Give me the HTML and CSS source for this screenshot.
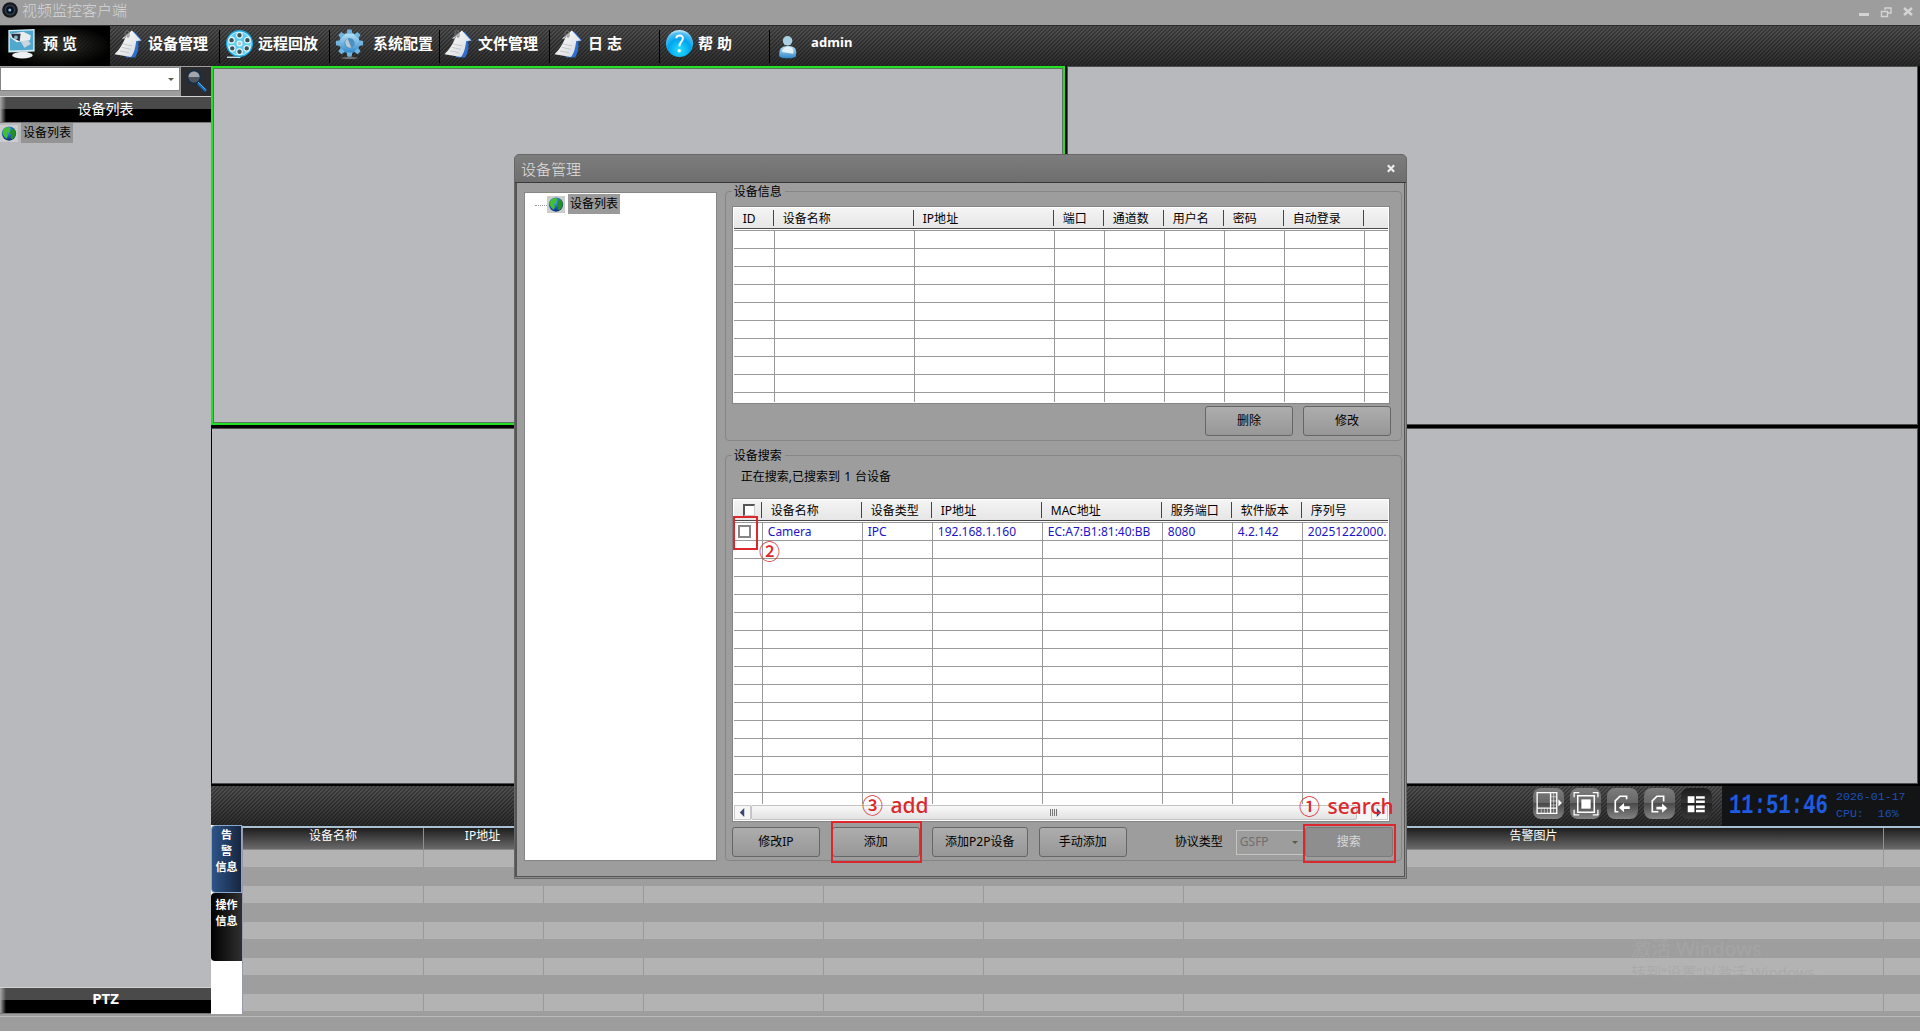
FILE: index.html
```html
<!DOCTYPE html>
<html lang="zh-CN">
<head>
  <meta charset="UTF-8" />
  <title>视频监控客户端</title>
  <link rel="stylesheet" href="styles.css">
</head>
<body>
  <!-- Shared icon shapes -->
  <svg class="defs" width="0" height="0">
    <defs>
      <linearGradient id="g-blue" x1="0" y1="0" x2="0" y2="1">
        <stop offset="0" stop-color="#b9e4fb"/><stop offset="1" stop-color="#2f86c8"/>
      </linearGradient>
      <linearGradient id="g-paper" x1="0" y1="0" x2="1" y2="1">
        <stop offset="0" stop-color="#ffffff"/><stop offset="1" stop-color="#d4d8dc"/>
      </linearGradient>
      <radialGradient id="g-help" cx=".5" cy=".75" r=".75">
        <stop offset="0" stop-color="#25e0ff"/><stop offset=".55" stop-color="#00a4ee"/><stop offset=".85" stop-color="#52bff2"/><stop offset="1" stop-color="#d8f4ff"/>
      </radialGradient>
      <radialGradient id="g-globe" cx=".4" cy=".3" r=".8">
        <stop offset="0" stop-color="#5cb4ff"/><stop offset=".6" stop-color="#1450b4"/><stop offset="1" stop-color="#061c50"/>
      </radialGradient>
      <symbol id="i-globe" viewBox="0 0 16 16">
        <circle cx="8" cy="8" r="7.600" fill="url(#g-globe)"/>
        <path d="M1.500 5C3 1.500 6 .8 8.500 1L9.500 3 7.500 4.500 8.200 6.500 5.500 7.500 7 10 5.500 13.500 3 11.500 1 8z" fill="#3fc22e"/>
        <path d="M10 4l3-1.500 2.300 4-.5 4-3 3.500-2.500-1 1-3-1.500-2.500z" fill="#258f25"/>
      </symbol>
      <symbol id="i-paper" viewBox="0 0 30 30">
        <path d="M16 4l5-2 8 9.500-4 1c1 6 0 11-3 16.500H12z" fill="#2d6fd0"/>
        <path d="M8 9.500L18.500 1 28 11.500l-5 .5c-1 7-2 12.500-5.500 16.500L.5 25.500C5 21 8.500 16.500 11.500 9z" fill="url(#g-paper)"/>
        <path d="M9.500 15l9.500 2M8 18.500l9.500 2M6 22l9.500 2" stroke="#b4babf" stroke-width=".7" fill="none"/>
        <path d="M11.500 9V3.500a2 2 0 0 1 4-.5V7a1 1 0 0 1-2 0V4" stroke="#777" stroke-width="1" fill="none"/>
      </symbol>
    </defs>
  </svg>

  <header class="titlebar">
    <svg class="app-icon" viewBox="0 0 16 16">
      <circle cx="8" cy="8" r="7.800" fill="#15181c"/><circle cx="8" cy="8" r="5.500" fill="#303b48"/>
      <circle cx="8" cy="8" r="3.800" fill="#07121f"/><circle cx="7.800" cy="8" r="1.500" fill="#8eb8de"/>
    </svg>
    <span class="app-title">视频监控客户端</span>
    <div class="win-buttons">
      <svg viewBox="0 0 12 12"><path d="M1 8.500h10" stroke-width="3"/></svg>
      <svg viewBox="0 0 12 12"><path d="M5 4V2h6v5H8M1.500 5.500h6v5h-6z" stroke-width="1.400"/></svg>
      <svg viewBox="0 0 12 12"><path d="M2 2l8 7M10 2L2 9" stroke-width="2.400"/></svg>
    </div>
  </header>

  <nav class="navbar hatch">
    <a class="nav-item active">
      <svg class="nav-icon" viewBox="0 0 30 32">
        <path d="M1 1l28-1v24L1 25z" fill="#d4eef7"/><path d="M2.500 2.500l25-1V22l-25 1z" fill="#4fa9ce"/>
        <path d="M3 5l14-2 8 4-1 5-14 2-7-5z" fill="#e8edf0"/><path d="M4 5l10 0-1 8-8-4z" fill="#26333d"/><circle cx="9" cy="9" r="2" fill="#8fb1c6"/>
        <path d="M14 13l8-1 3 4-7 4z" fill="#cbd6dc"/><path d="M13 23h8l1 4H12z" fill="#c9d2d7"/><ellipse cx="16" cy="28" rx="11" ry="3.500" fill="#eef1f3"/>
      </svg>
      <span>预 览</span>
    </a>
    <a class="nav-item file"><svg class="nav-icon"><use href="#i-paper"/></svg><span>设备管理</span></a>
    <a class="nav-item">
      <svg class="nav-icon" viewBox="0 0 30 30">
        <path d="M2 28h14v1.500H2z" fill="#c8dce6"/>
        <circle cx="15" cy="14.500" r="14" fill="#19a8e6"/><circle cx="15" cy="14.500" r="12.500" fill="#c9f0fc"/>
        <circle cx="15" cy="14.500" r="11.500" fill="#5ccff2"/>
        <g fill="#3d5059" stroke="#e4f9ff" stroke-width="1.200"><circle cx="15" cy="6" r="2.900"/><circle cx="15" cy="23" r="2.900"/><circle cx="6.800" cy="11" r="2.900"/><circle cx="23.200" cy="11" r="2.900"/><circle cx="7.500" cy="19.500" r="2.900"/><circle cx="22.500" cy="19.500" r="2.900"/><circle cx="15" cy="14.500" r="2.500" fill="#b8c6cc"/></g>
      </svg>
      <span>远程回放</span>
    </a>
    <a class="nav-item wide">
      <svg class="nav-icon" viewBox="0 0 30 32">
        <g fill="url(#g-blue)"><circle cx="15" cy="15" r="11"/>
          <path id="tooth" d="M12 5l.7-4.500h4.600L18 5z" fill="#6fb5e2"/>
          <use href="#tooth" transform="rotate(45 15 15)"/><use href="#tooth" transform="rotate(90 15 15)"/><use href="#tooth" transform="rotate(135 15 15)"/><use href="#tooth" transform="rotate(180 15 15)"/><use href="#tooth" transform="rotate(225 15 15)"/><use href="#tooth" transform="rotate(270 15 15)"/><use href="#tooth" transform="rotate(315 15 15)"/>
        </g>
        <circle cx="15" cy="15" r="5.500" fill="#4d90bf"/><path d="M13 10a5.500 5.500 0 0 0 4 10z" fill="#b8c9d3"/>
        <ellipse cx="15" cy="31" rx="9" ry=".8" fill="#888"/>
      </svg>
      <span>系统配置</span>
    </a>
    <a class="nav-item file"><svg class="nav-icon"><use href="#i-paper"/></svg><span>文件管理</span></a>
    <a class="nav-item file"><svg class="nav-icon"><use href="#i-paper"/></svg><span>日 志</span></a>
    <a class="nav-item">
      <svg class="nav-icon" viewBox="0 0 30 30">
        <circle cx="15" cy="14.500" r="14" fill="url(#g-help)"/>
        <path d="M11.500 9c1-4 7.500-3.500 7 .5-.4 3-3.500 3.500-3.700 8" stroke="#fff" stroke-width="2" fill="none"/><circle cx="14.700" cy="22" r="1.700" fill="#fff"/>
      </svg>
      <span>帮 助</span>
    </a>
    <a class="nav-item user">
      <svg class="nav-icon" viewBox="0 0 30 30">
        <path d="M5 27c-1-9 3-12 10-12s11 3 9 12c-3 3-16 3-19 0z" fill="url(#g-blue)"/>
        <path d="M8 22c1-5 4-6 8-6s6 4 5 8z" fill="#e3f1f7"/>
        <circle cx="14.500" cy="9" r="5.500" fill="#a9d0e2"/>
      </svg>
      <span>admin</span>
    </a>
  </nav>

  <div class="workspace">
    <aside class="sidebar">
      <div class="search-row">
        <div class="combo"><i class="caret"></i></div>
        <div class="search-btn">
          <svg viewBox="0 0 30 28"><circle cx="13" cy="10" r="6.500" fill="#4e565e" stroke="#102f4c" stroke-width="1.500"/><path d="M7.500 10a5.500 5.500 0 0 1 11 0z" fill="#a4a7aa"/><path d="M17 16l8 8" stroke="#1470ba" stroke-width="2.800"/><path d="M17 15l7.500 7.500" stroke="#6db9ee" stroke-width=".8"/></svg>
        </div>
      </div>
      <div class="panel-head">设备列表</div>
      <div class="tree">
        <svg class="globe"><use href="#i-globe"/></svg><span class="tree-label">设备列表</span>
      </div>
      <div class="panel-head ptz">PTZ</div>
    </aside>

    <main class="main">
      <div class="video-grid">
        <div class="video selected"></div><div class="video"></div>
        <div class="video"></div><div class="video"></div>
      </div>

      <div class="control-bar hatch">
        <div class="tool-btn"><svg viewBox="0 0 30 30"><path d="M4 4.500h19v20H4zM17 4.500v20M4 19.500h19" stroke-width="1.300"/><path d="M20 5v19M17 8.500h6M17 12.500h6M17 16.500h6M8 20v4M11 20v4M14 20v4" stroke-width=".5"/><path d="M24.500 11l3.500 3.500-3.500 3.500z" class="solid"/></svg></div>
        <div class="tool-btn"><svg viewBox="0 0 30 30"><path d="M7.500 7.500h16v16h-16z" stroke-width="1.500"/><path d="M11 11h9v9h-9z" class="solid"/><path d="M4 9V4.500h5M22 4.500h5V9M27 21v5h-5M9 26H4v-5" stroke-width="1.200"/></svg></div>
        <div class="tool-btn"><svg viewBox="0 0 30 30"><path d="M19 11V8h-6.500L8 12.500V23h3" stroke-width="1.600"/><path d="M11.500 19l5-4.500v3.200H22v2.600h-5.500v3.200z" class="solid"/></svg></div>
        <div class="tool-btn"><svg viewBox="0 0 30 30"><path d="M19 13V8h-6.500L8 12.500V23h6" stroke-width="1.600"/><path d="M22.500 19.500l-5-4.500v3.200h-5.500v2.600h5.500V24z" class="solid"/></svg></div>
        <div class="tool-btn pressed"><svg viewBox="0 0 30 30"><path d="M6.500 8h6.500v6.500H6.500zM6.500 17h6.500v6.500H6.500zM14.500 8H23v2.500h-8.500zM14.500 12H23v2.500h-8.500zM14.500 17H23v2.500h-8.500zM14.500 21H23v2.500h-8.500z" class="solid"/></svg></div>
        <div class="clock">
          <div class="clock-time">11:51:46</div>
          <div class="clock-info"><div>2026-01-17</div><div>CPU:&nbsp; 16%</div></div>
        </div>
      </div>

      <div class="alarm">
        <div class="tabs">
          <div class="tab active">告<br>警<br>信息</div>
          <div class="tab">操作<br>信息</div>
        </div>
        <div class="alarm-list">
          <div class="alarm-head"><span>设备名称</span><span>IP地址</span><span></span><span></span><span></span><span></span><span>告警图片</span><span></span></div>
          <div class="alarm-rows" id="alarm-rows"></div>
          <div class="watermark"><div>激活 Windows</div><p>转到“设置”以激活 Windows。</p></div>
        </div>
      </div>
    </main>
  </div>
  <footer class="statusbar"></footer>

  <!-- Device management dialog -->
  <section class="dialog">
    <div class="dialog-title"><span>设备管理</span>
      <svg viewBox="0 0 10 10"><path d="M1.500 1.500l7 7M8.500 1.500l-7 7"/></svg>
    </div>
    <div class="dialog-body">
      <div class="dialog-tree">
        <i class="dots"></i><svg class="globe"><use href="#i-globe"/></svg><span class="tree-label">设备列表</span>
      </div>
      <div class="dialog-right">
        <div class="group info">
          <div class="legend">设备信息</div>
          <div class="grid info-grid">
            <div class="grid-head"><span class="id-head">ID</span><span>设备名称</span><span>IP地址</span><span>端口</span><span>通道数</span><span>用户名</span><span>密码</span><span>自动登录</span><span></span></div>
            <div class="grid-body" id="info-body"></div>
          </div>
          <div class="btn-row right"><button>删除</button><button>修改</button></div>
        </div>

        <div class="group search">
          <div class="legend">设备搜索</div>
          <div class="search-status">正在搜索,已搜索到 1 台设备</div>
          <div class="grid search-grid">
            <div class="grid-head"><span class="check-head"><i></i></span><span>设备名称</span><span>设备类型</span><span>IP地址</span><span>MAC地址</span><span>服务端口</span><span>软件版本</span><span>序列号</span></div>
            <div class="grid-body" id="search-body">
              <div class="grid-row"><span><i class="check"></i></span><span>Camera</span><span>IPC</span><span>192.168.1.160</span><span>EC:A7:B1:81:40:BB</span><span>8080</span><span>4.2.142</span><span>20251222000.</span></div>
            </div>
            <div class="scrollbar">
              <div class="arrow"><svg viewBox="0 0 6 10"><path d="M5.500 0v10L.5 5z"/></svg></div>
              <div class="thumb"><i></i></div>
              <div class="arrow end"><svg viewBox="0 0 6 10"><path d="M.5 0v10l5-5z"/></svg></div>
            </div>
          </div>
          <div class="btn-row">
            <button>修改IP</button><button>添加</button><button class="p2p">添加P2P设备</button><button class="manual">手动添加</button>
            <label>协议类型</label>
            <div class="protocol">GSFP<i class="caret"></i></div>
            <button class="disabled">搜索</button>
          </div>
        </div>
      </div>
    </div>
  </section>

  <!-- Step marks -->
  <div class="mark box-check"></div>
  <div class="mark box-add"></div>
  <div class="mark box-search"></div>
  <div class="step step-check">②</div>
  <div class="step step-add">③ add</div>
  <div class="step step-search">① search</div>

  <script>
    // Fill a list with empty rows so the cell lines show
    function addRows(id, rowClass, count, cols) {
      const body = document.getElementById(id);
      for (let i = 0; i < count; i++) {
        const row = document.createElement('div');
        row.className = rowClass;
        row.innerHTML = '<span></span>'.repeat(cols);
        body.appendChild(row);
      }
    }
    addRows('info-body', 'grid-row', 10, 9);
    addRows('search-body', 'grid-row', 15, 8);
    addRows('alarm-rows', 'alarm-row', 5, 8);
  </script>
</body>
</html>
```
FILE: styles.css
```css
* {
  box-sizing: border-box;
}
body {
  margin: 0;
  width: 1920px;
  height: 1032px;
  overflow: hidden;
  position: relative;
  display: flex;
  flex-direction: column;
  background: #fff;
  color: #000;
  font-family: "Noto Sans", "Noto Sans CJK SC", sans-serif;
  font-size: 12px;
  line-height: 16px;
}
svg {
  display: block;
  flex: none;
}
.defs {
  position: absolute;
}
span {
  white-space: nowrap;
}

/* Title bar */
.titlebar {
  height: 25px;
  flex: none;
  display: flex;
  align-items: flex-start;
  padding: 2px 6px 0 2px;
  background: #9d9d9d;
}
.app-icon {
  width: 16px;
  height: 16px;
}
.app-title {
  margin-left: 4px;
  font-size: 15px;
  line-height: 16px;
  font-weight: 300;
  color: #d6d6d6;
}
.win-buttons {
  margin-left: auto;
  display: flex;
  gap: 10px;
  padding-top: 4px;
}
.win-buttons svg {
  width: 12px;
  height: 12px;
  fill: none;
  stroke: #d4d4d4;
}

/* Navigation */
.hatch {
  background:
    linear-gradient(135deg, rgba(0, 0, 0, .3) 25%, transparent 25%, transparent 50%, rgba(0, 0, 0, .3) 50%, rgba(0, 0, 0, .3) 75%, transparent 75%) 0 0 / 4px 4px,
    linear-gradient(#525252, #2c2c2c);
}
.navbar {
  height: 41px;
  flex: none;
  display: flex;
  border-top: 1px solid #2b2b2b;
}
.nav-item {
  width: 110px;
  height: 40px;
  display: flex;
  align-items: center;
  padding: 0 0 4px 5px;
  color: #fff;
  font-size: 15px;
  font-weight: 700;
  background: linear-gradient(#000, #000) right 4px / 1px 33px no-repeat;
}
.nav-item span {
  padding-bottom: 2px;
}
.nav-item.active {
  padding-left: 7px;
  background: radial-gradient(ellipse at center, rgba(40, 44, 20, .3), #000 75%);
}
.nav-item.user {
  background: none;
}
.nav-icon {
  width: 29px;
  height: 30px;
  margin-right: 4px;
}
.active .nav-icon {
  margin-right: 7px;
}
.wide .nav-icon {
  margin: 0 9px 0 0;
}
.file .nav-icon {
  margin: 0 5px 0 -1px;
}
.user .nav-icon {
  width: 28px;
  height: 26px;
  margin: 4px 9px 0 -1px;
}
.user span {
  font-size: 13px;
  letter-spacing: .1px;
  padding-bottom: 5px;
}

/* Sidebar */
.workspace {
  height: 948px;
  flex: none;
  display: flex;
}
.sidebar {
  width: 211px;
  display: flex;
  flex-direction: column;
  background: #b7b9bd;
}
.search-row {
  height: 30px;
  display: flex;
  align-items: flex-start;
  background: #9d9d9d;
  padding-top: 1px;
}
.combo {
  width: 180px;
  height: 24px;
  border: 1px solid #858585;
  background: #fff;
  display: flex;
  align-items: center;
  justify-content: flex-end;
  padding-right: 5px;
}
.caret {
  border: 3px solid transparent;
  border-top-color: #5b5a49;
  border-bottom: 0;
}
.search-btn {
  width: 30px;
  height: 29px;
  margin-left: 1px;
  background: #2c2c2e;
}
.panel-head {
  height: 27px;
  border-top: 1px solid #d2d2d2;
  border-bottom: 1px solid #777;
  background: linear-gradient(90deg, #a8a8a8, transparent 6px), linear-gradient(#4a4a4a 12px, #000 12px);
  color: #fff;
  font-size: 14px;
  line-height: 24px;
  text-align: center;
}
.tree {
  flex: 1;
  display: flex;
  align-items: flex-start;
}
.globe {
  width: 18px;
  height: 17px;
  margin-top: 2px;
  padding: 1px;
  background: #ccc;
}
.tree-label {
  margin-left: 3px;
  padding: 0 2px;
  height: 20px;
  line-height: 19px;
  background: #949494;
}
.ptz {
  font-size: 15px;
  font-weight: 700;
  line-height: 20px;
}

/* Video area */
.main {
  width: 1709px;
  display: flex;
  flex-direction: column;
}
.video-grid {
  height: 720px;
  display: grid;
  grid-template-columns: 854px 851px;
  grid-template-rows: 359px 356px;
  gap: 3px 2px;
  background: #000;
  padding: 0 2px 2px 0;
}
.video {
  background: #b7b9bd;
  border: 1px solid #4d4d4d;
}
.video:nth-child(n+3) {
  border-left: 1px solid #000;
}
.video.selected {
  border: 2px solid #22e022;
  box-shadow: inset 0 0 0 1px #5d755d;
}

/* Control bar */
.control-bar {
  height: 40px;
  display: flex;
  justify-content: flex-end;
}
.tool-btn {
  width: 31px;
  height: 31px;
  margin: 2px 6px 0 0;
  border-radius: 8px;
  background: linear-gradient(#7c7c7c 0, #666 48%, #4a4a4a 50%, #848484);
}
.tool-btn.pressed {
  margin-right: 10px;
  background: linear-gradient(#1c1c1c, #363636 50%, #222 50%, #383838);
}
.tool-btn svg {
  width: 31px;
  height: 31px;
  fill: none;
  stroke: #fff;
}
.tool-btn .solid {
  fill: #fff;
  stroke: none;
}
.clock {
  width: 198px;
  display: flex;
  background: #131415;
  color: #1c50be;
}
.clock-time {
  width: 106px;
  height: 24px;
  margin: 8px 0 0;
  padding-left: 7px;
  color: #1e5be0;
  font: 700 20.6px/24px "Liberation Mono", monospace;
  transform: scaleY(1.35) skewX(-3deg);
}
.clock-info {
  padding: 2px 0 0 8px;
  font: 11.6px/17px "Liberation Mono", monospace;
}

/* Alarm list */
.alarm {
  height: 188px;
  display: flex;
  border-top: 2px solid #a9bfd2;
}
.tabs {
  width: 31px;
  margin-top: -3px;
  background: #fff;
}
.tab {
  height: 68px;
  padding-top: 2px;
  color: #fff;
  font-size: 11px;
  font-weight: 700;
  text-align: center;
  border-radius: 4px 0 0 4px;
  background: linear-gradient(90deg, #000, #303030);
}
.tab.active {
  height: 68px;
  padding-top: 1px;
  border: 1px solid #86a8cc;
  background: linear-gradient(90deg, #2d5488, #17263f);
}
.tab + .tab {
  padding-top: 4px;
}
.alarm-list {
  flex: 1;
  position: relative;
  border-left: 1px solid #9799ae;
  background: #9e9e9e;
}
.alarm-head,
.alarm-row {
  display: grid;
  grid-template-columns: 181px 120px 100px 180px 160px 200px 700px 1fr;
}
.alarm-head {
  height: 22px;
  background: linear-gradient(#1e1e1e, #6a6a6a);
  border-bottom: 1px solid #878787;
  color: #fff;
}
.alarm-head span {
  text-align: center;
  line-height: 15px;
  border-right: 1px solid #8f8f8f;
}
.alarm-head span:nth-child(2) {
  padding-right: 2px;
}
.alarm-row {
  height: 17px;
  margin-bottom: 19px;
  background: #b3b3b3;
}
.alarm-row span {
  border-right: 1px solid #999;
}
.alarm-row span:last-child,
.alarm-head span:last-child {
  border: 0;
}
.watermark {
  position: absolute;
  left: 1388px;
  top: 108px;
  color: rgba(175, 175, 175, .4);
  font-size: 20px;
  line-height: 25px;
}
.watermark p {
  margin: 0;
  font-size: 15px;
  line-height: 22px;
  color: rgba(163, 163, 163, .6);
}
.statusbar {
  height: 17px;
  flex: none;
  background: linear-gradient(#9d9d9d 2px, #bbb 2px, #bbb 3px, #9d9d9d 3px);
}

/* Dialog */
.dialog {
  position: absolute;
  left: 514px;
  top: 154px;
  width: 893px;
  height: 725px;
  display: flex;
  flex-direction: column;
  background: #9d9d9d;
  border: 1px solid #666;
  border-radius: 5px 5px 0 0;
  box-shadow: inset -1px -1px 0 #8c8c8c, inset 0 0 0 2px #555;
}
.dialog-title {
  height: 28px;
  flex: none;
  display: flex;
  align-items: center;
  justify-content: space-between;
  padding: 1px 10px 0 6px;
  border-bottom: 1px solid #3a3a3a;
  border-radius: 4px 4px 0 0;
  background: linear-gradient(#7d7d7d, #6e6e6e);
  color: #e0e0e0;
  font-size: 15px;
  font-weight: 300;
}
.dialog-title svg {
  width: 10px;
  height: 9px;
  margin-bottom: 2px;
  stroke: #eee;
  stroke-width: 2.4;
}
.dialog-body {
  display: flex;
  padding: 9px 4px 0 9px;
  gap: 8px;
}
.dialog-tree {
  width: 193px;
  height: 669px;
  display: flex;
  align-items: flex-start;
  padding: 1px 0 0 10px;
  border: 1px solid #868686;
  background: #fff;
}
.dialog-tree .tree-label {
  background: #9a9a9a;
}
.dots {
  width: 12px;
  margin-top: 11px;
  border-top: 1px dotted #999;
}
.dialog-right {
  width: 678px;
}
.group {
  border: 1px solid #858585;
  border-radius: 4px;
  padding: 0 0 0 6px;
}
.group.info {
  height: 250px;
  margin-top: -1px;
}
.group.search {
  height: 406px;
  margin-top: 14px;
}
.legend {
  width: max-content;
  height: 16px;
  margin-top: -8px;
  padding: 0 3px 0 2px;
  line-height: 16px;
  background: #9d9d9d;
}
.grid {
  width: 658px;
  border: 1px solid #858585;
  padding: 1px;
  background: #fff;
  overflow: hidden;
}
.grid-head,
.grid-row {
  display: grid;
}
.info-grid {
  height: 198px;
  margin-top: 6px;
}
.info-grid .grid-head,
.info-grid .grid-row {
  grid-template-columns: 41px 140px 140px 50px 60px 60px 60px 80px 1fr;
}
.search-grid .grid-head,
.search-grid .grid-row {
  grid-template-columns: 29px 100px 70px 110px 120px 70px 70px 1fr;
}
.grid-head {
  height: 21px;
  background: linear-gradient(#f4f4f4, #e6e6e6);
  border-bottom: 1px solid #4b4b4b;
}
.grid-head span {
  padding-left: 8px;
  line-height: 21px;
  background: linear-gradient(#444, #444) calc(100% - 1px) 2px / 1px 16px no-repeat;
}
.grid-head .id-head {
  padding-left: 9px;
}
.grid-head span:last-child {
  background: none;
}
.grid-body {
  margin-top: 1px;
  border-top: 1px solid #999;
  overflow: hidden;
}
.info-grid .grid-body {
  height: 172px;
}
.grid-row {
  height: 18px;
}
.grid-row span {
  padding-left: 5px;
  line-height: 18px;
  color: #1c14c8;
  border-right: 1px solid #999;
  border-bottom: 1px solid #999;
  overflow: hidden;
}
.grid-row span:last-child {
  border-right: 0;
}
.search-status {
  margin: 5px 0 0 9px;
  word-spacing: 1px;
}
.search-grid {
  height: 324px;
  margin-top: 13px;
}
.search-grid .grid-body {
  height: 282px;
}
.check-head i {
  display: block;
  width: 12px;
  height: 12px;
  margin: 4px 0 0 1px;
  background: #fff;
  border: 1px solid #ccc;
  border-top: 2px solid #555;
  border-left: 2px solid #555;
}
.check {
  display: block;
  width: 13px;
  height: 13px;
  margin: 2px 0 0 -1px;
  border: 2px solid #858585;
  background: #fff;
}
.scrollbar {
  height: 15px;
  margin-top: 1px;
  display: flex;
  background: #f6f6f6;
}
.arrow {
  width: 17px;
  border: 1px solid #c9c9c9;
  display: flex;
  align-items: center;
  justify-content: center;
}
.arrow svg {
  width: 6px;
  height: 9px;
  fill: #3b4678;
}
.arrow.end {
  margin-left: auto;
}
.thumb {
  width: 606px;
  border: 1px solid #c4c4c4;
  border-radius: 2px;
  background: linear-gradient(#f8f8f8, #e2e2e2);
  display: flex;
  align-items: center;
  justify-content: center;
}
.thumb i {
  width: 7px;
  height: 7px;
  background: repeating-linear-gradient(90deg, #777 0, #777 1px, transparent 1px, transparent 2px);
}
.btn-row {
  display: flex;
  align-items: center;
  margin-top: 5px;
}
.btn-row.right {
  justify-content: flex-end;
  gap: 10px;
  padding-right: 10px;
  margin-top: 2px;
}
button {
  width: 88px;
  height: 30px;
  padding: 0;
  border: 1px solid #666;
  border-radius: 3px;
  background: linear-gradient(#adadad, #979797);
  color: #000;
  font: inherit;
}
.btn-row:not(.right) button + button {
  margin-left: 12px;
}
.btn-row .p2p {
  width: 96px;
}
.btn-row:not(.right) button.manual {
  margin-left: 11px;
}
.btn-row label {
  margin: 0 13px 0 48px;
}
.protocol {
  width: 67px;
  height: 25px;
  display: flex;
  align-items: center;
  justify-content: space-between;
  padding: 0 5px 0 3px;
  border: 1px solid #c4c4c0;
  border-right: 0;
  color: #6f6f6f;
}
button.disabled {
  margin-left: 2px;
  background: #8e8e8e;
  border-color: #7b7b7b;
  color: #d9d9d9;
}

/* Step marks drawn over the dialog */
.mark {
  position: absolute;
  border: 2px solid #dc282d;
}
.box-check {
  left: 733px;
  top: 516px;
  width: 25px;
  height: 34px;
}
.box-add {
  left: 831px;
  top: 821px;
  width: 91px;
  height: 42px;
}
.box-search {
  left: 1303px;
  top: 824px;
  width: 93px;
  height: 39px;
}
.step {
  position: absolute;
  color: #dc282d;
  font-size: 21px;
  font-weight: 500;
  line-height: 24px;
  word-spacing: 2px;
  white-space: nowrap;
}
.step-check {
  left: 759px;
  top: 539px;
}
.step-add {
  left: 862px;
  top: 793px;
}
.step-search {
  left: 1299px;
  top: 794px;
}
```
